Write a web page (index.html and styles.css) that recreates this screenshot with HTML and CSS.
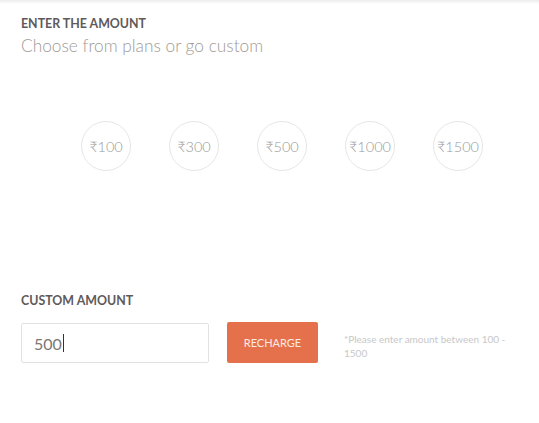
FILE: index.html
```html
<!DOCTYPE html>
<html>
<head>
<meta charset="utf-8">
<link rel="stylesheet" href="styles.css">
</head>
<body>
<div class="topline"></div>
<main class="page">
  <section class="plans">
    <h2 class="label">ENTER THE AMOUNT</h2>
    <p class="sub">Choose from plans or go custom</p>
    <div class="circles">
      <div class="circle">₹100</div>
      <div class="circle">₹300</div>
      <div class="circle">₹500</div>
      <div class="circle">₹1000</div>
      <div class="circle">₹1500</div>
    </div>
  </section>
  <section class="custom">
    <h2 class="label">CUSTOM AMOUNT</h2>
    <div class="row">
      <div class="input"><span class="val">500</span><span class="caret"></span></div>
      <button class="btn">RECHARGE</button>
      <p class="hint">*Please enter amount between 100 - 1500</p>
    </div>
  </section>
</main>
</body>
</html>
```
FILE: styles.css
```css
html, body { margin: 0; padding: 0; background: #fff; }
body { font-family: "Lato", "Noto Sans", sans-serif; width: 539px; height: 423px; overflow: hidden; position: relative; }
.topline { height: 4px; background: linear-gradient(#ececec, #fff); }
.page { padding: 0 0 0 21px; }
.label { margin: 0; font-size: 12.4px; font-weight: 700; color: #5e5a5a; letter-spacing: 0; line-height: 16px; }
.plans .label { margin-top: 12px; }
.sub { margin: 3px 0 0; font-size: 17.3px; font-weight: 300; color: #a09a95; line-height: 21px; }
.circles { display: flex; gap: 38px; margin: 65px 0 0 60px; }
.circle { width: 48px; height: 48px; border: 1px solid #e6e6e6; border-radius: 50%; display: flex; align-items: center; justify-content: center; font-size: 14.5px; font-weight: 300; color: #999; font-family: "Lato", "Noto Sans", sans-serif; }
.custom { margin-top: 122px; }
.row { display: flex; align-items: flex-start; margin-top: 14px; }
.input { border: 1px solid #e2e2e2; border-radius: 2px; display: flex; align-items: center; padding-left: 12px; box-sizing: border-box; width: 188px; height: 40px; font-size: 16px; color: #7b7773; }
.caret { width: 1px; height: 18px; background: #333; margin-left: 1px; }
.btn { margin-left: 18px; margin-top: -1px; width: 91px; height: 41px; background: #e5714c; border: none; border-radius: 2px; color: #fbe9e2; font-family: "Lato", "Noto Sans", sans-serif; font-size: 11px; padding: 0; }
.hint { margin: 9px 0 0 26px; width: 180px; font-size: 10px; line-height: 14px; color: #c8c8c8; }
```
